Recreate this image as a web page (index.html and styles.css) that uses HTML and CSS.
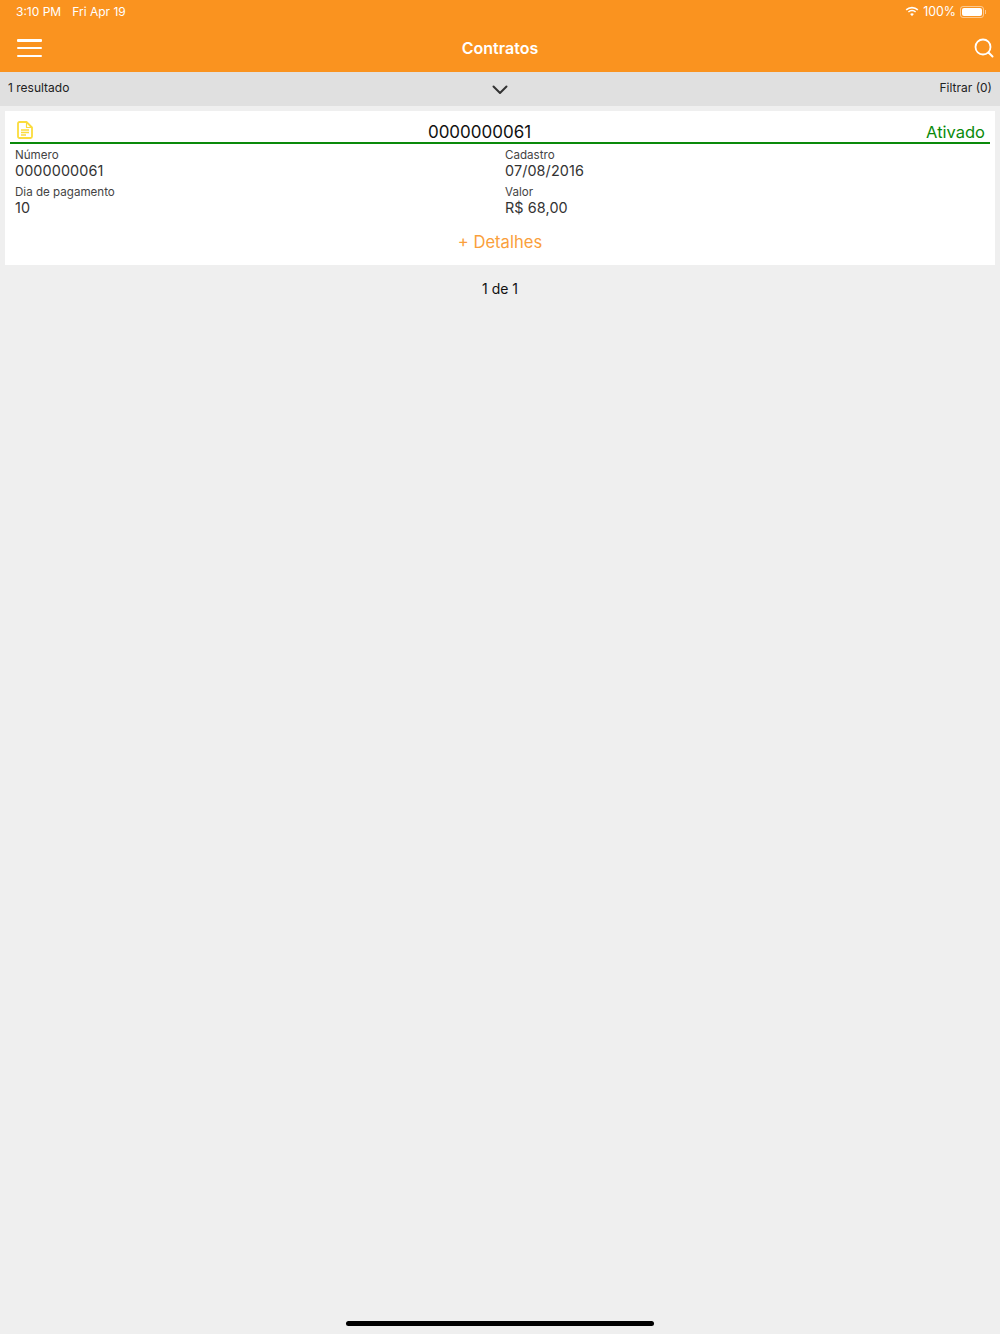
FILE: index.html
```html
<!DOCTYPE html>
<html lang="pt">

<head>
  <meta charset="UTF-8" />
  <link rel="stylesheet" href="styles.css">
  <title>Contratos</title>
</head>

<body>
  <div class="app">
    <header class="top">
      <div class="status">
        <div class="status-left">
          <span>3:10 PM</span>
          <span>Fri Apr 19</span>
        </div>
        <div class="status-right">
          <svg class="wifi" width="14" height="11" viewBox="0 0 15 11">
            <path d="M7.5 2.2c2.2 0 4.2.8 5.7 2.2l1.1-1.2A10 10 0 0 0 7.5.5 10 10 0 0 0 .7 3.2l1.1 1.2a8.300 8.300 0 0 1 5.700-2.200z" fill="#fff" />
            <path d="M7.500 5.300c1.300 0 2.400.5 3.300 1.300l1.100-1.200a6.400 6.400 0 0 0-8.800 0l1.100 1.200c.9-.8 2-1.300 3.300-1.300z" fill="#fff" />
            <path d="M7.500 10.500l2-2.200a2.900 2.900 0 0 0-4 0z" fill="#fff" />
          </svg>
          <span>100%</span>
          <div class="battery">
            <div class="battery-fill"></div>
          </div>
          <div class="battery-tip"></div>
        </div>
      </div>
      <div class="nav">
        <button class="icon-btn menu">
          <span></span>
          <span></span>
          <span></span>
        </button>
        <h1 class="title">Contratos</h1>
        <button class="icon-btn search">
          <svg width="20" height="20" viewBox="0 0 20 20" fill="none" stroke="#fff">
            <circle cx="9" cy="9" r="7.500" stroke-width="1.800" />
            <path d="M14.500 14.500L18.500 18.500" stroke-width="2" stroke-linecap="round" />
          </svg>
        </button>
      </div>
    </header>

    <div class="filter-bar">
      <span>1 resultado</span>
      <svg class="chevron" width="16" height="10" viewBox="0 0 16 10" fill="none" stroke="#333" stroke-width="2" stroke-linecap="round" stroke-linejoin="round">
        <path d="M1.500 1.500L8 8l6.500-6.500" />
      </svg>
      <span class="filter-link">Filtrar (0)</span>
    </div>

    <main class="list">
      <article class="card">
        <div class="card-head">
          <svg class="doc" width="16" height="18" viewBox="0 0 16 18" fill="none" stroke="#fbdc3c" stroke-width="1.800" stroke-linejoin="round">
            <path d="M2.500 1h7l5.500 5.500v9a1.500 1.500 0 0 1-1.500 1.500h-11A1.500 1.500 0 0 1 1 15.500v-13A1.500 1.500 0 0 1 2.500 1z" />
            <path d="M9.500 1v5.500H15" stroke-width="1.200" />
            <path d="M4 9h8M4 11.500h8M4 14h5" stroke-width="1.400" />
          </svg>
          <div class="card-number">0000000061</div>
          <div class="card-status">Ativado</div>
        </div>
        <div class="fields">
          <div class="field">
            <div class="label">Número</div>
            <div class="value">0000000061</div>
          </div>
          <div class="field">
            <div class="label">Cadastro</div>
            <div class="value">07/08/2016</div>
          </div>
          <div class="field">
            <div class="label">Dia de pagamento</div>
            <div class="value">10</div>
          </div>
          <div class="field">
            <div class="label">Valor</div>
            <div class="value">R$ 68,00</div>
          </div>
        </div>
        <div class="details">+ Detalhes</div>
      </article>
      <div class="pages">1 de 1</div>
    </main>

    <div class="home-bar"></div>
  </div>
</body>

</html>
```

FILE: styles.css
```css
* {
  box-sizing: border-box;
  padding: 0;
  margin: 0;
}

body {
  background-color: #efefef;
  font-family: Inter, "Liberation Sans", sans-serif;
  color: #222;
}

.app {
  min-height: 1334px;
  display: flex;
  flex-direction: column;
}

.top {
  height: 72px;
  background-color: #fa931f;
  color: #fff;
}

.status {
  height: 23px;
  padding: 0 14px 0 16px;
  display: flex;
  justify-content: space-between;
  align-items: center;
  font-size: 12px;
}

.status-left {
  display: flex;
  gap: 11px;
}

.status-right {
  display: flex;
  align-items: center;
  font-size: 12.400px;
}

.wifi {
  margin-right: 4px;
}

.battery {
  width: 24px;
  height: 12px;
  margin-left: 4px;
  padding: 1px;
  border: 1px solid rgba(255, 255, 255, 0.5);
  border-radius: 3px;
}

.battery-fill {
  height: 100%;
  background-color: #fff;
  border-radius: 2px;
}

.battery-tip {
  width: 1px;
  height: 4px;
  margin-left: 1px;
  background-color: rgba(255, 255, 255, 0.5);
}

.nav {
  height: 49px;
  padding: 1px 6px 0;
  display: grid;
  grid-template-columns: 1fr auto 1fr;
  align-items: center;
}

.icon-btn {
  background: none;
  border: none;
  display: flex;
}

.menu {
  width: 25px;
  height: 18px;
  margin-left: 11px;
  flex-direction: column;
  justify-content: space-between;
}

.menu span {
  width: 100%;
  height: 2.500px;
  background-color: #fff;
  border-radius: 1px;
}

.search {
  justify-self: end;
}

.title {
  font-size: 16px;
  font-weight: 600;
  text-align: center;
}

.filter-bar {
  height: 34px;
  padding: 0 8px 3px;
  background-color: #e0e0e0;
  display: grid;
  grid-template-columns: 1fr auto 1fr;
  align-items: center;
  font-size: 12px;
  color: #222;
}

.filter-link {
  text-align: right;
}

.chevron {
  margin-top: 5px;
}

.list {
  padding: 5px 5px 0;
  flex: 1;
}

.card {
  height: 154px;
  padding: 0 5px;
  background-color: #fff;
}

.card-head {
  height: 33px;
  padding: 0 5px 0 7px;
  border-bottom: 2px solid #0a8a0a;
  display: flex;
  justify-content: space-between;
  align-items: flex-end;
}

.doc {
  margin-bottom: 3px;
}

.card-number {
  flex: 1;
  margin-bottom: -1px;
  text-align: center;
  font-size: 17px;
  line-height: 22px;
  color: #111;
}

.card-status {
  margin-bottom: -1px;
  font-size: 16.500px;
  line-height: 22px;
  color: #0a8a0a;
}

.fields {
  padding: 4px 5px 0;
  display: grid;
  grid-template-columns: 490px 1fr;
  row-gap: 5px;
}

.label {
  font-size: 11.600px;
  line-height: 14px;
  color: #444;
}

.value {
  font-size: 14.400px;
  line-height: 18px;
  letter-spacing: 0.1px;
  color: #333;
}

.details {
  margin-top: 11px;
  text-align: center;
  font-size: 16.600px;
  line-height: 28px;
  color: #fa9f3c;
}

.pages {
  margin-top: 14px;
  text-align: center;
  font-size: 14px;
  line-height: 20px;
  color: #111;
}

.home-bar {
  width: 308px;
  height: 5px;
  margin: 0 auto 8px;
  background-color: #000;
  border-radius: 3px;
}
```
